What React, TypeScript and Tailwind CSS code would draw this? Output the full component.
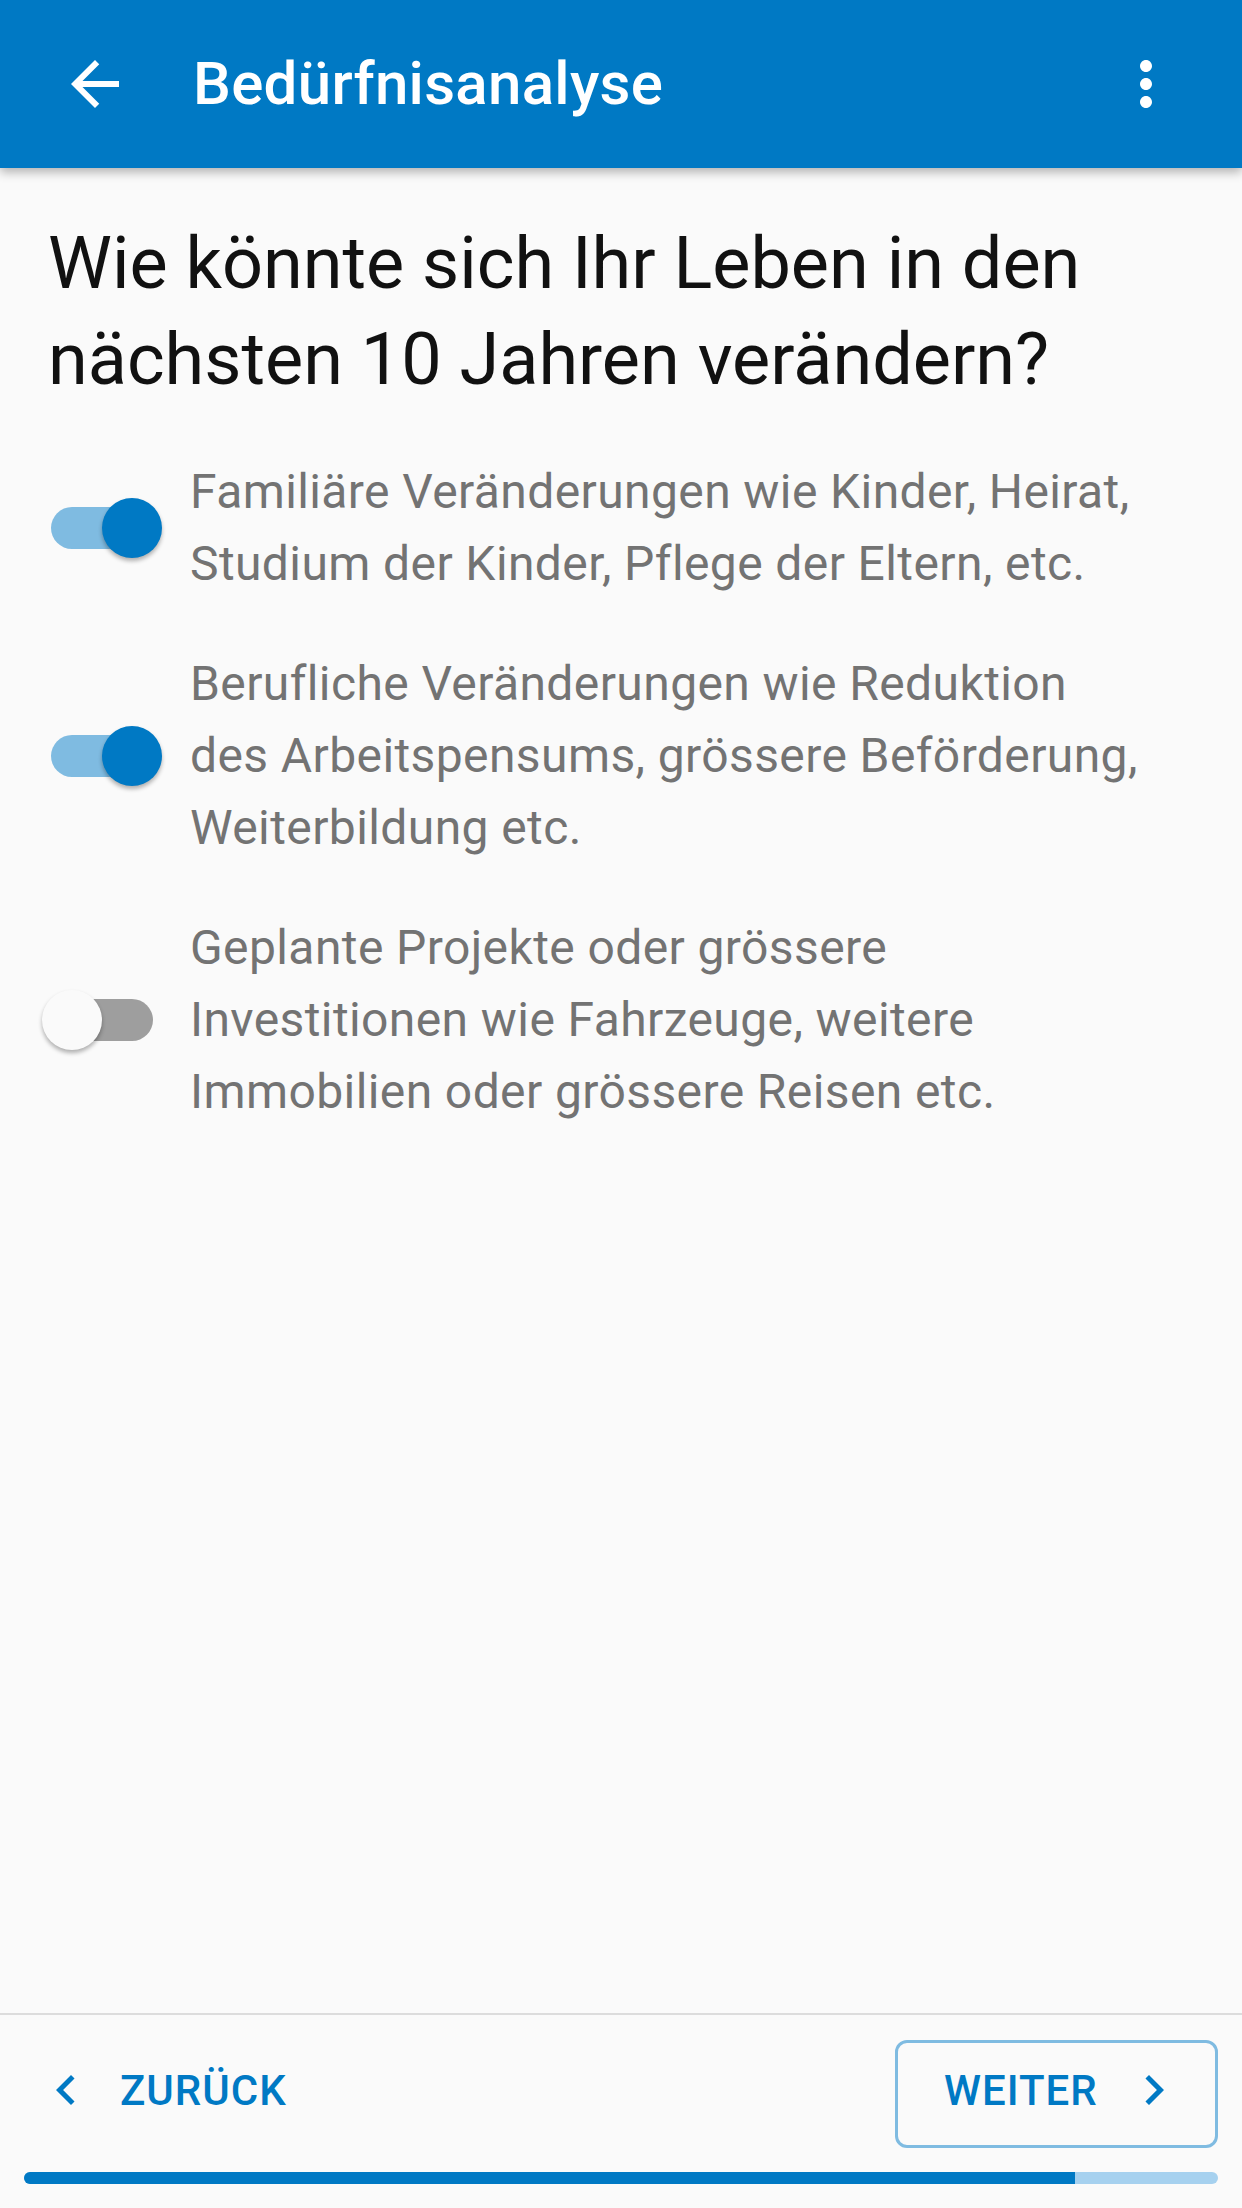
import { FC } from "react";

// Items shown on this step of the analysis
interface Option {
	label: string;
	checked: boolean;
}

const options: Option[] = [
	{
		label: "Familiäre Veränderungen wie Kinder, Heirat, Studium der Kinder, Pflege der Eltern, etc.",
		checked: true,
	},
	{
		label: "Berufliche Veränderungen wie Reduktion des Arbeitspensums, grössere Beförderung, Weiterbildung etc.",
		checked: true,
	},
	{
		label: "Geplante Projekte oder grössere Investitionen wie Fahrzeuge, weitere Immobilien oder grössere Reisen etc.",
		checked: false,
	},
];

// Material style switch
const Switch: FC<{ checked: boolean }> = ({ checked }) => {
	return (
		<div className="relative h-[60px] w-[120px] shrink-0">
			<div
				className={
					checked
						? "absolute left-[9px] top-[9px] h-[42px] w-[102px] rounded-full bg-[#7fbbe1]"
						: "absolute left-[9px] top-[9px] h-[42px] w-[102px] rounded-full bg-[#9e9e9e]"
				}
			></div>
			<div
				className={
					checked
						? "absolute left-[60px] top-0 h-[60px] w-[60px] rounded-full bg-[#0079c4] shadow-[0_3px_4px_rgba(0,0,0,0.3)]"
						: "absolute left-0 top-0 h-[60px] w-[60px] rounded-full bg-[#fafafa] shadow-[0_3px_4px_rgba(0,0,0,0.3)]"
				}
			></div>
		</div>
	);
};

const OptionRow: FC<{ option: Option }> = ({ option }) => {
	return (
		<div className="flex items-center gap-[28px]">
			<Switch checked={option.checked} />
			<p className="w-[960px] text-[48px] leading-[72px] tracking-[0.4px] text-[#737373]">{option.label}</p>
		</div>
	);
};

export default function App() {
	return (
		<div className="flex h-[2208px] flex-col bg-[#fafafa] font-[Roboto,sans-serif]">
			{/* App bar */}
			<header className="relative z-10 flex h-[168px] shrink-0 items-center bg-[#0079c4] pl-[59px] pr-[60px] shadow-[0_4px_10px_rgba(0,0,0,0.3)]">
				<svg viewBox="0 0 24 24" className="h-[72px] w-[72px] fill-white">
					<path d="M20 11H7.83l5.59-5.59L12 4l-8 8 8 8 1.41-1.41L7.83 13H20v-2z" />
				</svg>
				<h1 className="ml-[62px] text-[60px] font-medium tracking-[0.3px] text-white">Bedürfnisanalyse</h1>
				<svg viewBox="0 0 24 24" className="ml-auto h-[72px] w-[72px] fill-white">
					<path d="M12 8c1.1 0 2-.9 2-2s-.9-2-2-2-2 .9-2 2 .9 2 2 2zm0 2c-1.1 0-2 .9-2 2s.9 2 2 2 2-.9 2-2-.9-2-2-2zm0 6c-1.1 0-2 .9-2 2s.9 2 2 2 2-.9 2-2-.9-2-2-2z" />
				</svg>
			</header>

			{/* Question */}
			<main className="px-[48px] pt-[48px]">
				<h2 className="text-[72px] leading-[96px] text-[#111111]">
					Wie könnte sich Ihr Leben in den nächsten 10 Jahren verändern?
				</h2>
				<div className="-ml-[6px] mt-[48px] flex flex-col gap-[48px]">
					{options.map((option, index) => (
						<OptionRow key={`${option.label}_${index}`} option={option} />
					))}
				</div>
			</main>

			{/* Navigation */}
			<footer className="mt-auto border-t-2 border-[#dcdcdc] px-[24px] pb-[24px] pt-[25px]">
				<div className="flex h-[108px] items-center justify-between">
					<button className="flex items-center pb-[8px] pl-[12px] text-[#0079c4]">
						<svg viewBox="0 0 24 24" className="h-[60px] w-[60px] fill-[#0079c4]">
							<path d="M15.41 7.41L14 6l-6 6 6 6 1.41-1.41L10.83 12z" />
						</svg>
						<span className="ml-[24px] text-[42px] font-medium tracking-[1px]">ZURÜCK</span>
					</button>
					<button className="flex h-[108px] w-[323px] items-center rounded-[12px] border-[3px] border-[#7fbbe1] pb-[8px] pl-[46px] text-[#0079c4]">
						<span className="text-[42px] font-medium tracking-[1px]">WEITER</span>
						<svg viewBox="0 0 24 24" className="ml-[26px] h-[60px] w-[60px] fill-[#0079c4]">
							<path d="M10 6L8.59 7.41 13.17 12l-4.58 4.59L10 18l6-6z" />
						</svg>
					</button>
				</div>
				<div className="mt-[24px] h-[12px] overflow-hidden rounded-full bg-[#a6d1ef]">
					<div className="h-full w-[88%] bg-[#0079c4]"></div>
				</div>
			</footer>
		</div>
	);
}
